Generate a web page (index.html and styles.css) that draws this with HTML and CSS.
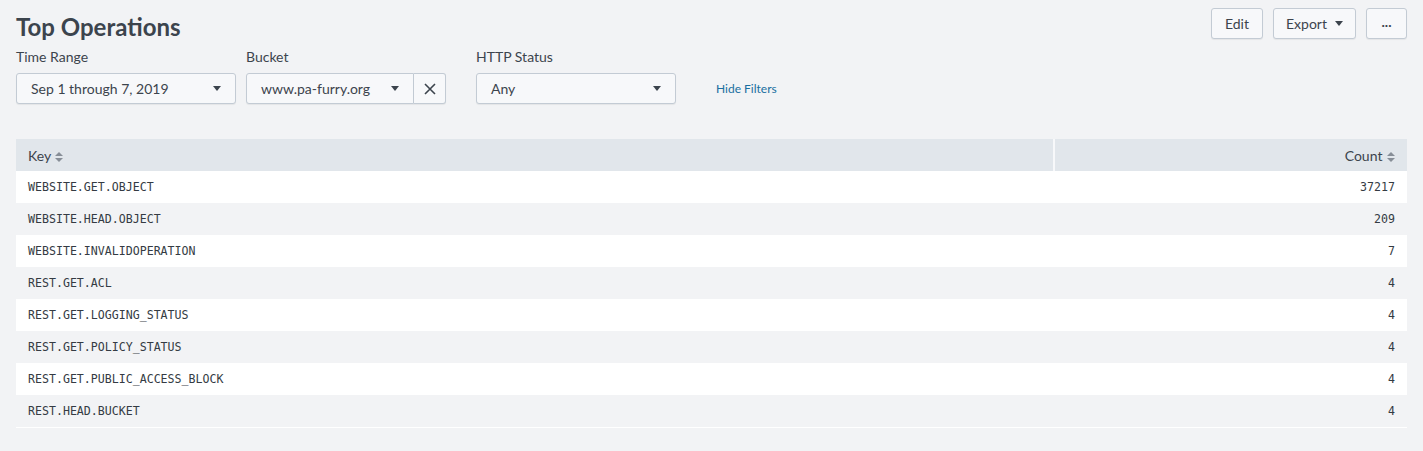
FILE: index.html
```html
<!DOCTYPE html>
<html>
<head>
<meta charset="utf-8">
<link rel="stylesheet" href="styles.css">
</head>
<body>
<div class="page">
  <div class="header">
    <h1 class="title">Top Operations</h1>
    <div class="actions">
      <button class="btn btn-edit">Edit</button>
      <button class="btn btn-export">Export <span class="caret"></span></button>
      <button class="btn btn-more">...</button>
    </div>
  </div>
  <div class="filters">
    <div class="field field-time">
      <div class="label">Time Range</div>
      <div class="select">
        <span class="select-text">Sep 1 through 7, 2019</span>
        <span class="caret"></span>
      </div>
    </div>
    <div class="field field-bucket">
      <div class="label">Bucket</div>
      <div class="combo">
        <div class="select select-left">
          <span class="select-text">www.pa-furry.org</span>
          <span class="caret"></span>
        </div>
        <div class="clear-btn">
          <svg width="12" height="12" viewBox="0 0 12 12"><path d="M1 1 L11 11 M11 1 L1 11" stroke="#3c444d" stroke-width="1.6" fill="none"/></svg>
        </div>
      </div>
    </div>
    <div class="field field-status">
      <div class="label">HTTP Status</div>
      <div class="select">
        <span class="select-text">Any</span>
        <span class="caret"></span>
      </div>
    </div>
    <a class="hide-filters">Hide Filters</a>
  </div>
  <table class="grid">
    <thead>
      <tr>
        <th class="col-key">Key <span class="sort"></span></th>
        <th class="col-count">Count <span class="sort"></span></th>
      </tr>
    </thead>
    <tbody>
      <tr><td>WEBSITE.GET.OBJECT</td><td class="num">37217</td></tr>
      <tr><td>WEBSITE.HEAD.OBJECT</td><td class="num">209</td></tr>
      <tr><td>WEBSITE.INVALIDOPERATION</td><td class="num">7</td></tr>
      <tr><td>REST.GET.ACL</td><td class="num">4</td></tr>
      <tr><td>REST.GET.LOGGING_STATUS</td><td class="num">4</td></tr>
      <tr><td>REST.GET.POLICY_STATUS</td><td class="num">4</td></tr>
      <tr><td>REST.GET.PUBLIC_ACCESS_BLOCK</td><td class="num">4</td></tr>
      <tr><td>REST.HEAD.BUCKET</td><td class="num">4</td></tr>
    </tbody>
  </table>
</div>
</body>
</html>
```

FILE: styles.css
```css
* { box-sizing: border-box; }
html, body {
  margin: 0;
  padding: 0;
  background: #f2f3f5;
  color: #3c444d;
  font-family: Lato, "Open Sans", sans-serif;
  font-size: 14px;
}
.page {
  padding: 8px 16px 0 16px;
}
.header {
  display: flex;
  justify-content: space-between;
  align-items: flex-start;
  height: 40px;
}
.title {
  margin: 4px 0 0 0;
  font-size: 24px;
  font-weight: 700;
  line-height: 30px;
  color: #3c444d;
}
.actions {
  display: flex;
  gap: 10px;
}
.btn {
  height: 31px;
  border: 1px solid #c3cbd4;
  border-radius: 3px;
  background: #f7f8fa;
  box-shadow: 0 1px 1px rgba(0,0,0,0.06);
  font-family: inherit;
  font-size: 14px;
  color: #3c444d;
  padding: 0 12px;
  display: flex;
  align-items: center;
  gap: 8px;
}
.btn-edit { width: 52px; justify-content: center; }
.btn-export { width: 83px; justify-content: center; }
.btn-more { width: 41px; justify-content: center; font-weight: 700; padding-bottom: 4px; }
.caret {
  display: inline-block;
  width: 0;
  height: 0;
  border-left: 4px solid transparent;
  border-right: 4px solid transparent;
  border-top: 5px solid #3c444d;
}
.filters {
  display: flex;
  align-items: flex-end;
}
.field { display: flex; flex-direction: column; }
.label {
  line-height: 18px;
  margin-bottom: 7px;
  color: #3c444d;
}
.field-time { width: 220px; margin-right: 10px; }
.field-bucket { width: 200px; margin-right: 30px; }
.field-status { width: 200px; margin-right: 40px; }
.select {
  height: 31px;
  border: 1px solid #c3cbd4;
  border-radius: 3px;
  background: #f7f8fa;
  box-shadow: 0 1px 1px rgba(0,0,0,0.06);
  display: flex;
  align-items: center;
  justify-content: space-between;
  padding: 0 14px 0 14px;
}
.combo { display: flex; }
.select-left {
  flex: 1;
  border-radius: 3px 0 0 3px;
}
.clear-btn {
  width: 32px;
  height: 31px;
  border: 1px solid #c3cbd4;
  border-left: none;
  border-radius: 0 3px 3px 0;
  background: #f7f8fa;
  box-shadow: 0 1px 1px rgba(0,0,0,0.06);
  display: flex;
  align-items: center;
  justify-content: center;
}
.hide-filters {
  color: #1a6fa0;
  font-size: 12px;
  line-height: 31px;
  height: 31px;
}
.grid {
  margin-top: 35px;
  width: 100%;
  border-collapse: collapse;
  border-bottom: 1px solid #ffffff;
}
.grid th {
  background: #e1e6eb;
  height: 32px;
  font-weight: 400;
  text-align: left;
  padding: 0 12px;
  color: #3c444d;
}
.grid th.col-key {
  border-right: 2px solid #f7f8fa;
}
.grid th.col-count {
  width: 353px;
  text-align: right;
}
.sort {
  display: inline-block;
  width: 8px;
  height: 10px;
  position: relative;
  vertical-align: -1px;
  margin-left: 1px;
}
.sort::before, .sort::after {
  content: "";
  position: absolute;
  left: 0;
  border-left: 4px solid transparent;
  border-right: 4px solid transparent;
}
.sort::before { top: 0; border-bottom: 4px solid #878e97; }
.sort::after { bottom: 0; border-top: 4px solid #878e97; }
.grid td {
  height: 32px;
  padding: 0 12px;
  font-family: "DejaVu Sans Mono", "Liberation Mono", monospace;
  font-size: 11.6px;
  color: #343b43;
}
.grid td.num { text-align: right; }
.grid tbody tr:nth-child(odd) td { background: #ffffff; }
.grid tbody tr:nth-child(even) td { background: #f2f3f5; }
```
